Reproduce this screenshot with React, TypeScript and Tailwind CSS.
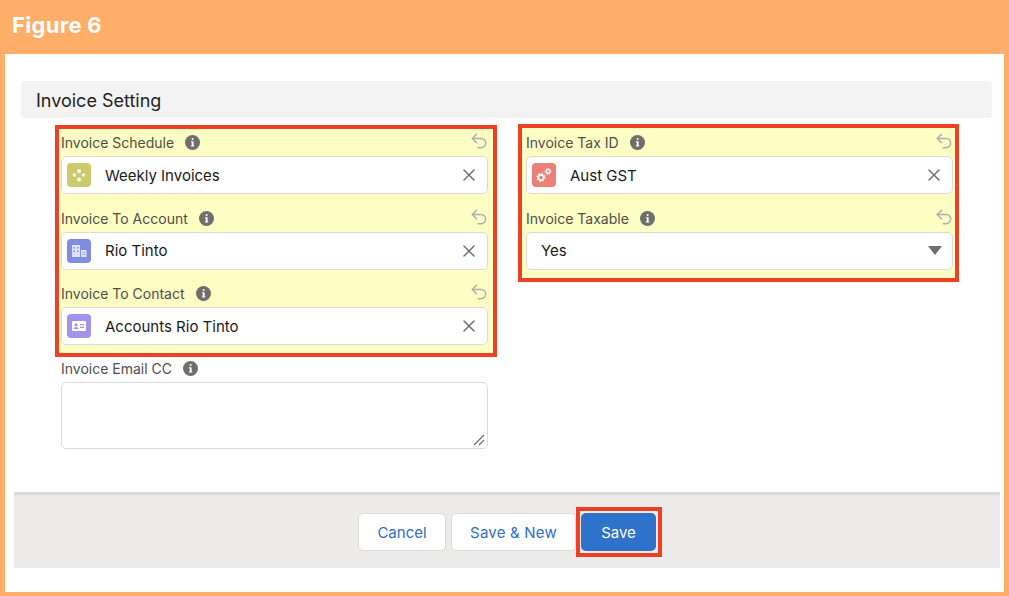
import React from "react";
import { X, Undo2 } from "lucide-react";

const Info = () => (
  <svg width="15" height="15" viewBox="0 0 15 15" className="shrink-0">
    <circle cx="7.5" cy="7.5" r="7.5" fill="#706e6b" />
    <rect x="6.6" y="3" width="2" height="2" rx="1" fill="#fff" />
    <path d="M5.9 6.2h2.7v4.2h.7v1H5.9v-1h.8V7.2h-.8z" fill="#fff" />
  </svg>
);

const ScheduleIcon = () => (
  <svg width="24" height="24" viewBox="0 0 24 24">
    <rect width="24" height="24" rx="4" fill="#cbcb6d" />
    <circle cx="12" cy="8" r="2" fill="#fff" />
    <circle cx="12" cy="16.5" r="2" fill="#fff" />
    <circle cx="7.5" cy="12" r="1.7" fill="#fff" />
    <circle cx="16.5" cy="12" r="1.7" fill="#fff" />
  </svg>
);

const AccountIcon = () => (
  <svg width="24" height="24" viewBox="0 0 24 24">
    <rect width="24" height="24" rx="4" fill="#7f8de1" />
    <path d="M5 6h8v12H5z" fill="#dfe3f8" />
    <path d="M14 11h5.500v7H14z" fill="#dfe3f8" />
    <path d="M6.500 8h1.500v1.500H6.500zM10 8h1.500v1.500H10zM6.500 11.500h1.500V13H6.500zM10 11.500h1.500V13H10zM15.500 13h1v1h-1zM17.300 13h1v1h-1zM15.500 15h1v1h-1zM17.300 15h1v1h-1z" fill="#7f8de1" />
  </svg>
);

const ContactIcon = () => (
  <svg width="24" height="24" viewBox="0 0 24 24">
    <rect width="24" height="24" rx="4" fill="#a094ed" />
    <rect x="5" y="7" width="14" height="10" rx="1.300" fill="#fff" />
    <circle cx="9" cy="10.800" r="1.600" fill="#a094ed" />
    <path d="M6.500 15c0-1.300 1.200-2 2.500-2s2.500.7 2.500 2z" fill="#a094ed" />
    <path d="M13 10h4v1.200h-4zM13 12.800h4V14h-4z" fill="#a094ed" />
  </svg>
);

const TaxIcon = () => (
  <svg width="24" height="24" viewBox="0 0 24 24">
    <rect width="24" height="24" rx="4" fill="#e9807a" />
    <circle cx="9" cy="14.500" r="2.600" fill="none" stroke="#fff" strokeWidth="1.600" />
    <circle cx="9" cy="14.500" r="4" fill="none" stroke="#fff" strokeWidth="1.200" strokeDasharray="1.500 1.640" />
    <circle cx="16" cy="8.500" r="1.800" fill="none" stroke="#fff" strokeWidth="1.300" />
    <circle cx="16" cy="8.500" r="3" fill="none" stroke="#fff" strokeWidth="1" strokeDasharray="1.200 1.150" />
  </svg>
);

const Field = ({ label, icon, value, arrow }: { label: string; icon?: React.ReactNode; value: string; arrow?: boolean }) => (
  <div>
    <div className="flex h-[27px] items-center justify-between">
      <div className="flex items-center gap-[11px] text-[14px] text-[#4f4e4c]">
        <span>{label}</span>
        <Info />
      </div>
      <Undo2 size={20} strokeWidth={1.8} className="mr-[-1px] mt-[-3px] text-[#aeaeae]" />
    </div>
    <div className="flex h-[38px] items-center rounded-[5px] border border-[#dddbda] bg-white pl-[5px] pr-[8px]">
      {icon ? <div className="mr-[14px] flex">{icon}</div> : <div className="w-[9px]" />}
      <span className="flex-1 pt-[2px] text-[15px] text-[#1a1a1a]">{value}</span>
      {arrow ? (
        <svg width="14" height="9" viewBox="0 0 14 9" className="mr-[2px]">
          <path d="M0 0h14L7 9z" fill="#706e6b" />
        </svg>
      ) : (
        <X size={20} strokeWidth={1.8} className="text-[#706e6b]" />
      )}
    </div>
  </div>
);

export default function App() {
  return (
    <div className="flex h-[596px] w-[1009px] flex-col bg-[#ffae69] font-['Inter',sans-serif]">
      <div className="flex h-[54px] items-center pb-[4px] pl-[12px] text-[22px] font-bold tracking-[0.3px] text-white">
        Figure 6
      </div>
      <div className="mx-[5px] mb-[4px] flex flex-1 flex-col bg-white">
        <div className="ml-[16px] mr-[12px] mt-[27px] flex h-[37px] items-center rounded-[4px] bg-[#f3f3f3] pl-[15px] pt-[1px] text-[18px] text-[#1f1f1f]">
          Invoice Setting
        </div>
        <div className="ml-[50px] mt-[7px] flex items-start gap-[21px]">
          <div className="w-[442px]">
            <div className="flex flex-col gap-[10.5px] border-[4px] border-[#ee4023] bg-[#fdfdc4] pb-[8px] pl-[2px] pr-[5px]">
              <Field label="Invoice Schedule" icon={<ScheduleIcon />} value="Weekly Invoices" />
              <Field label="Invoice To Account" icon={<AccountIcon />} value="Rio Tinto" />
              <Field label="Invoice To Contact" icon={<ContactIcon />} value="Accounts Rio Tinto" />
            </div>
            <div className="pl-[6px] pr-[9px]">
              <div className="flex h-[25px] items-center gap-[11px] pb-[2px] text-[14px] text-[#4f4e4c]">
                <span>Invoice Email CC</span>
                <Info />
              </div>
              <div className="relative h-[67px] rounded-[5px] border border-[#dddbda] bg-white">
                <svg width="12" height="12" viewBox="0 0 12 12" className="absolute bottom-[2px] right-[2px]">
                  <path d="M1 11 11 1M6 11l5-5" stroke="#706e6b" strokeWidth="1.200" />
                </svg>
              </div>
            </div>
          </div>
          <div className="mt-[-1px] flex w-[441px] flex-col gap-[10.5px] border-[4px] border-[#ee4023] bg-[#fdfdc4] pb-[8px] pl-[4px] pr-[2px] pt-[1px]">
            <Field label="Invoice Tax ID" icon={<TaxIcon />} value="Aust GST" />
            <Field label="Invoice Taxable" value="Yes" arrow />
          </div>
        </div>
        <div className="mb-[24px] ml-[9px] mr-[4px] mt-auto flex h-[76px] items-center justify-center border-t-[3px] border-[#dddcdb] bg-[#ecebea] pl-[5px] pt-[1px] text-[15px]">
          <button className="h-[38px] w-[88px] rounded-[5px] border border-[#dddbda] bg-white pl-[1px] pt-[3px] text-[#2e6fc5]">Cancel</button>
          <button className="ml-[5px] h-[38px] w-[125px] rounded-[5px] border border-[#dddbda] bg-white pl-[1px] pt-[3px] tracking-[0.2px] text-[#2e6fc5]">Save &amp; New</button>
          <div className="flex h-[50px] w-[86px] items-center justify-center border-[4px] border-[#ee4023]">
            <button className="h-[38px] w-[75px] rounded-[5px] bg-[#2f72ca] pt-[3px] text-white">Save</button>
          </div>
        </div>
      </div>
    </div>
  );
}
